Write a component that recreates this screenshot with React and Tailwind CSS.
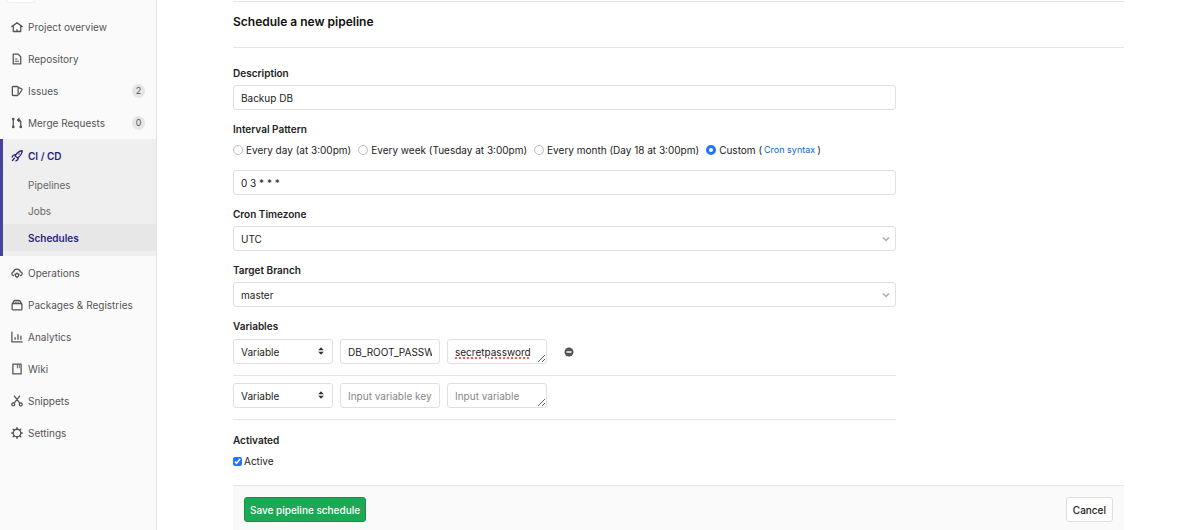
import React, { useState } from 'react';

const Icon = ({ children }) => (
    <svg viewBox="0 0 16 16" className="size-3 shrink-0" fill="none" stroke="currentColor" strokeWidth="1.7" strokeLinecap="round" strokeLinejoin="round" aria-hidden="true">
        {children}
    </svg>
);

const icons = {
    home: <><path d="M1 7.5 8 2.300l7 5.200M3 6.500V14h10V6.500" /><path d="M8 13.500v-2" /></>,
    doc: <><path d="M3 1.500h6.500L13 5v9.500H3z" /><path d="M5.800 8h2.400M5.800 11h4.400" strokeWidth="1.500" /></>,
    issues: <><rect x="1.800" y="2" width="7.700" height="12" rx="1" /><path d="M10.500 3.500 14 5.200c.8.500.8 1 .4 1.800L11 12" /></>,
    merge: (
        <>
            <path d="M3 3v10M13 13V7c0-2-1-3-3-3H9" />
            <path d="M10.500 1.500 8 4l2.500 2.500z" fill="currentColor" strokeWidth="1" />
            <g fill="currentColor" stroke="none">
                <circle cx="3" cy="2.800" r="1.800" />
                <circle cx="3" cy="13.200" r="1.800" />
                <circle cx="13" cy="13.200" r="1.800" />
            </g>
        </>
    ),
    rocket: <><path d="M5.500 8C7.500 4 11 1.500 15 1c-.5 4-2.500 7.500-6.500 9.500zM5.500 6.200 3 7 1.500 9.500M9.800 10.500 9 13l-2.500 1.500" /><path d="M4.500 11 2 14M10.700 5.300v.1" /></>,
    operations: <><path d="M3.500 11.500C0 10.500.5 6.500 3.500 6.500 4.500 1.500 11.500 1.500 12.500 6.500c3 0 3.500 4 0 5" /><circle cx="8" cy="11" r="2.200" /><path d="M8 8v.3M8 13.700v.5M5 9.500l.5.2M11 9.500l-.5.2" /></>,
    package: <><rect x="1.500" y="6" width="13" height="8.500" rx="1" /><path d="M2.500 6C3 3.500 4 2 5.500 2h5c1.500 0 2.500 1.500 3 4" /><path d="M6.500 6V4M9.500 6V4" strokeWidth="1.200" /></>,
    chart: <path d="M1.200 1.500v13H15M5.500 11V9M9.300 11V5M13.200 11V7" />,
    wiki: <><path d="M2.500 1.500h11v13h-11z" /><path d="M8.500 2v4.500M11 2v4.500" strokeWidth="1.200" /></>,
    scissors: <><circle cx="3" cy="12.500" r="2" /><circle cx="13" cy="12.500" r="2" /><path d="m4.200 10.800 7.300-9.300M11.800 10.800 4.500 1.500" /></>,
    gear: <><circle cx="8" cy="8" r="5" /><path d="M8 1v1.800M8 13.200V15M1 8h1.800M13.200 8H15M3 3l1.200 1.200M11.800 11.800 13 13M13 3l-1.200 1.200M4.200 11.800 3 13" strokeWidth="2" /></>,
};

const topItems = [
    { label: 'Project overview', icon: 'home' },
    { label: 'Repository', icon: 'doc' },
    { label: 'Issues', icon: 'issues', count: 2 },
    { label: 'Merge Requests', icon: 'merge', count: 0 },
];

const bottomItems = [
    { label: 'Operations', icon: 'operations' },
    { label: 'Packages & Registries', icon: 'package' },
    { label: 'Analytics', icon: 'chart' },
    { label: 'Wiki', icon: 'wiki' },
    { label: 'Snippets', icon: 'scissors' },
    { label: 'Settings', icon: 'gear' },
];

const NavItem = ({ label, icon, count }) => (
    <a href="#" className="flex h-8 items-center pr-[11px] pl-[11px] text-[#555]">
        <Icon>{icons[icon]}</Icon>
        <span className="ml-[5px] whitespace-nowrap">{label}</span>
        {count !== undefined && (
            <span className="ml-auto min-w-[13px] rounded-full bg-[#e6e6e6] px-[3px] text-center text-[9px] leading-[14px]">{count}</span>
        )}
    </a>
);

const Sidebar = () => (
    <nav className="flex w-[157px] shrink-0 flex-col border-r border-[#e4e4e4] bg-[#fafafa]">
        <div className="mb-2 ml-[7px] h-[3px] w-7 rounded-b-sm border-x border-b border-[#f0f0f0] bg-white" />
        {topItems.map((item) => <NavItem key={item.label} {...item} />)}
        <div className="mb-px h-[117px] border-l-[3px] border-[#44449a] bg-[#efefef]">
            <a href="#" className="flex h-[33px] items-center pl-2 font-semibold text-[#2a1f7a]">
                <Icon>{icons.rocket}</Icon>
                <span className="ml-[5px]">CI / CD</span>
            </a>
            <a href="#" className="flex h-[26px] items-center pl-[25px] text-[#666]">Pipelines</a>
            <a href="#" className="flex h-[26px] items-center pl-[25px] text-[#666]">Jobs</a>
            <a href="#" className="flex h-[27px] items-center bg-[#e7e7e7] pl-[25px] font-semibold text-[#2a1f7a]">Schedules</a>
        </div>
        {bottomItems.map((item) => <NavItem key={item.label} {...item} />)}
    </nav>
);

const Chevron = () => (
    <svg viewBox="0 0 8 8" className="pointer-events-none absolute top-[9px] right-[6px] size-2" fill="none" stroke="#aaa" strokeWidth="1.500" aria-hidden="true">
        <path d="m1 2.500 3 3 3-3" />
    </svg>
);

const Sorter = () => (
    <svg viewBox="0 0 8 10" className="pointer-events-none absolute top-[7px] right-2 h-[10px] w-2" fill="#333" aria-hidden="true">
        <path d="M4 1.200 6.800 4.200H1.200zM4 8.800 1.200 5.800h5.600z" />
    </svg>
);

const field = 'h-[25px] w-full rounded-[3px] border border-[#dfdfdf] bg-white px-[7px] text-[#222] placeholder:text-[#888] outline-none';

const Dropdown = ({ id, label, value }) => (
    <div className="mt-[11px]">
        <label htmlFor={id} className="block font-semibold">{label}</label>
        <div className="relative mt-1">
            <select id={id} className={`${field} appearance-none`}>
                <option>{value}</option>
            </select>
            <Chevron />
        </div>
    </div>
);

const VariableRow = ({ index, name, value }) => (
    <div className="flex border-b border-[#e5e5e5] pb-[11px]">
        <div className="relative mr-[7px] w-[100px]">
            <select aria-label={`Variable type ${index}`} className={`${field} appearance-none`}>
                <option>Variable</option>
            </select>
            <Sorter />
        </div>
        <input aria-label={`Variable key ${index}`} defaultValue={name} placeholder="Input variable key" className={`${field} mr-[7px] max-w-[100px]`} />
        <textarea
            aria-label={`Variable value ${index}`}
            defaultValue={value}
            placeholder="Input variable value"
            spellCheck={false}
            className={`${field} max-w-[100px] resize overflow-hidden pt-1 ${value ? 'underline decoration-[#ff5a50] decoration-dotted decoration-2' : ''}`}
        />
        {value && (
            <button type="button" aria-label="Remove variable" className="ml-[17px] flex h-[25px] items-center">
                <svg viewBox="0 0 10 10" className="size-[10px]" aria-hidden="true">
                    <circle cx="5" cy="5" r="4.500" fill="#555" />
                    <path d="M2.500 5h5" stroke="#fff" strokeWidth="1.500" />
                </svg>
            </button>
        )}
    </div>
);

const intervals = [
    { id: 'day', label: 'Every day (at 3:00pm)' },
    { id: 'week', label: 'Every week (Tuesday at 3:00pm)' },
    { id: 'month', label: 'Every month (Day 18 at 3:00pm)' },
    { id: 'custom', label: 'Custom (' },
];

const App = () => {
    const [interval, setInterval] = useState('custom');

    return (
        <div className="flex min-h-screen bg-white font-[Inter,sans-serif] text-[10px] leading-4 text-[#222]">
            <Sidebar />
            <main className="min-w-0 flex-1 px-[76px]">
                <form className="flex min-h-screen flex-col" onSubmit={(e) => e.preventDefault()}>
                    <h1 className="mt-px border-y border-[#e5e5e5] pt-[10px] pb-[15px] text-[12px] leading-5 font-semibold text-[#111]">Schedule a new pipeline</h1>
                    <div className="max-w-[663px] pt-[17px]">
                        <label htmlFor="description" className="block font-semibold">Description</label>
                        <input id="description" defaultValue="Backup DB" className={`${field} mt-1`} />

                        <fieldset className="mt-[11px]">
                            <legend className="font-semibold">Interval Pattern</legend>
                            <div className="mt-[5px] flex flex-wrap items-center gap-x-[7px]">
                                {intervals.map(({ id, label }) => (
                                    <span key={id} className="flex items-center">
                                        <input
                                            type="radio"
                                            id={id}
                                            name="interval"
                                            checked={interval === id}
                                            onChange={() => setInterval(id)}
                                            className="mr-[3px] size-[10px] appearance-none rounded-full border border-[#bbb] bg-white checked:border-[3px] checked:border-[#1f75ff]"
                                        />
                                        <label htmlFor={id}>{label}</label>
                                        {id === 'custom' && (
                                            <>
                                                <a href="#" className="mx-[2px] text-[9px] text-[#1068bf]">Cron syntax</a>
                                                <span>)</span>
                                            </>
                                        )}
                                    </span>
                                ))}
                            </div>
                            <input aria-label="Custom interval" defaultValue="0 3 * * *" className={`${field} mt-3`} />
                        </fieldset>

                        <Dropdown id="timezone" label="Cron Timezone" value="UTC" />
                        <Dropdown id="branch" label="Target Branch" value="master" />

                        <div className="mt-[11px] font-semibold">Variables</div>
                        <div className="mt-[5px]">
                            <VariableRow index={1} name="DB_ROOT_PASSWORD" value="secretpassword" />
                            <div className="pt-[7px]">
                                <VariableRow index={2} />
                            </div>
                        </div>

                        <div className="mt-3 font-semibold">Activated</div>
                        <div className="mt-[5px] flex items-center">
                            <input type="checkbox" id="active" defaultChecked className="mr-[2px] size-[9px] accent-[#1f75ff]" />
                            <label htmlFor="active">Active</label>
                        </div>
                    </div>

                    <div className="mt-4 flex flex-1 items-start justify-between border-t border-[#e5e5e5] bg-[#fafafa] px-[11px] pt-[11px]">
                        <button type="submit" className="h-[25px] rounded-[3px] border border-[#168f48] bg-[#1aaa55] px-[5px] font-medium text-white">Save pipeline schedule</button>
                        <button type="button" className="h-[25px] rounded-[3px] border border-[#dfdfdf] bg-white px-[6px] font-medium">Cancel</button>
                    </div>
                </form>
            </main>
        </div>
    );
};

export default App;
